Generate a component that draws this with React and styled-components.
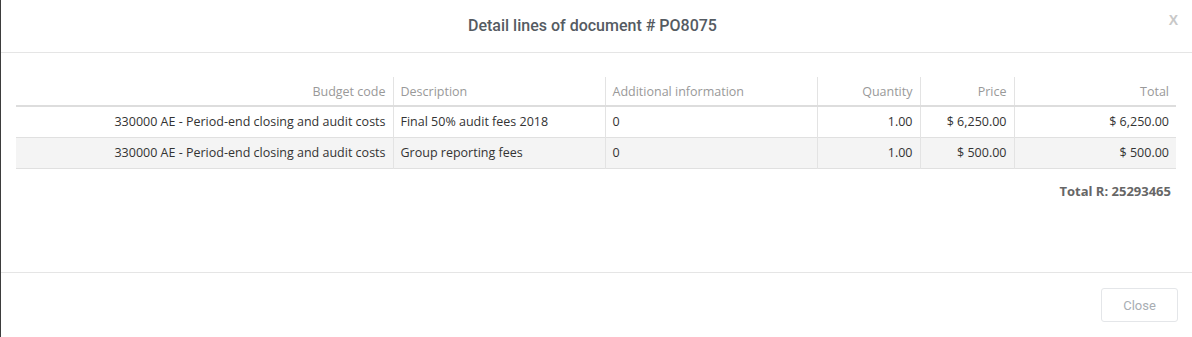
import React from "react";
import styled, { createGlobalStyle } from "styled-components";

const Global = createGlobalStyle`
  html, body { margin: 0; padding: 0; background: #3d3d3d; }
  body { font-family: "Open Sans", "Liberation Sans", sans-serif; }
  * { box-sizing: border-box; }
`;

const Modal = styled.div`
  margin-left: 1px;
  width: 1191px;
  height: 337px;
  background: #fff;
  display: flex;
  flex-direction: column;
`;

const Header = styled.div`
  position: relative;
  height: 53px;
  border-bottom: 1px solid #e5e5e5;
  display: flex;
  align-items: center;
  justify-content: center;
  padding-right: 8px;
`;

const Title = styled.h4`
  margin: 0;
  font-family: Roboto, "Liberation Sans", sans-serif;
  font-weight: 500;
  font-size: 16px;
  color: #555b62;
  padding-bottom: 2px;
`;

const CloseX = styled.button`
  position: absolute;
  right: 14px;
  top: 12px;
  border: none;
  background: none;
  padding: 0;
  font-family: "Liberation Sans", sans-serif;
  font-weight: bold;
  font-size: 14px;
  color: #c8c8c8;
  cursor: pointer;
`;

const Body = styled.div`
  padding: 24px 15px 0 15px;
  height: 220px;
  border-bottom: 1px solid #e5e5e5;
`;

const Table = styled.table`
  width: 1160px;
  border-collapse: collapse;
  font-size: 12.5px;
  table-layout: fixed;
`;

const Th = styled.th`
  font-weight: normal;
  color: #999;
  text-align: ${(p) => p.$align || "left"};
  padding: 0 7px;
  height: 29px;
  border-bottom: 2px solid #dddddd;
  border-left: ${(p) => (p.$first ? "none" : "1px solid #e3e3e3")};
  vertical-align: middle;
`;

const Tr = styled.tr`
  background: ${(p) => (p.$odd ? "#f4f4f4" : "#fff")};
  border-bottom: 1px solid #e0e0e0;
`;

const Td = styled.td`
  color: #333;
  text-align: ${(p) => p.$align || "left"};
  padding: 0 7px;
  height: 31px;
  border-left: ${(p) => (p.$first ? "none" : "1px solid #e3e3e3")};
  white-space: nowrap;
`;

const TotalLine = styled.div`
  text-align: right;
  font-weight: bold;
  font-size: 13px;
  color: #666;
  padding: 13px 6px 0 0;
`;

const Footer = styled.div`
  display: flex;
  justify-content: flex-end;
  padding: 15px 14px;
`;

const CloseButton = styled.button`
  width: 77px;
  height: 34px;
  background: #fff;
  border: 1px solid #e4e6e9;
  border-radius: 3px;
  font-family: Roboto, "Liberation Sans", sans-serif;
  font-size: 13px;
  color: #a8adb3;
`;

const cols = [
  { label: "Budget code", align: "right", w: 377 },
  { label: "Description", align: "left", w: 212 },
  { label: "Additional information", align: "left", w: 212 },
  { label: "Quantity", align: "right", w: 103 },
  { label: "Price", align: "right", w: 94 },
  { label: "Total", align: "right", w: 162 },
];

const rows = [
  ["330000 AE - Period-end closing and audit costs", "Final 50% audit fees 2018", "0", "1.00", "$ 6,250.00", "$ 6,250.00"],
  ["330000 AE - Period-end closing and audit costs", "Group reporting fees", "0", "1.00", "$ 500.00", "$ 500.00"],
];

export default function App() {
  return (
    <>
      <Global />
      <Modal>
        <Header>
          <Title>Detail lines of document # PO8075</Title>
          <CloseX>X</CloseX>
        </Header>
        <Body>
          <Table>
            <colgroup>
              {cols.map((c) => (
                <col key={c.label} style={{ width: c.w }} />
              ))}
            </colgroup>
            <thead>
              <tr>
                {cols.map((c, i) => (
                  <Th key={c.label} $align={c.align} $first={i === 0}>
                    {c.label}
                  </Th>
                ))}
              </tr>
            </thead>
            <tbody>
              {rows.map((r, ri) => (
                <Tr key={ri} $odd={ri % 2 === 1}>
                  {r.map((v, i) => (
                    <Td key={i} $align={cols[i].align} $first={i === 0}>
                      {v}
                    </Td>
                  ))}
                </Tr>
              ))}
            </tbody>
          </Table>
          <TotalLine>Total R: 25293465</TotalLine>
        </Body>
        <Footer>
          <CloseButton>Close</CloseButton>
        </Footer>
      </Modal>
    </>
  );
}
